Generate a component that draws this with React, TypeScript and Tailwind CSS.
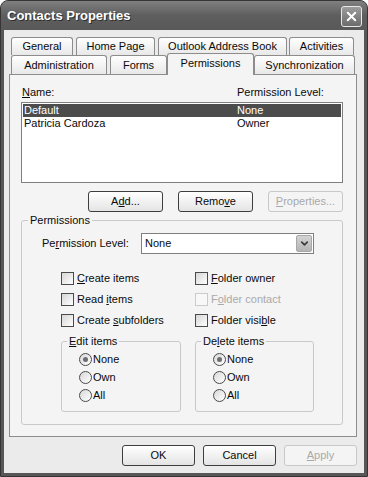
import { ChevronDown, X } from "lucide-react";

const Acc = ({ text, at }: { text: string; at: number }) => (
  <>
    {text.slice(0, at)}
    <span className="underline underline-offset-[1px]">{text[at]}</span>
    {text.slice(at + 1)}
  </>
);

const BackTab = ({ label, className }: { label: string; className: string }) => (
  <div
    className={`h-[18px] flex items-center justify-center border border-b-0 border-[#8c8c8c] rounded-t-[3px] bg-gradient-to-b from-white to-[#e8e8e8] ${className}`}
  >
    {label}
  </div>
);

const FrontTab = ({ label, className, selected }: { label: string; className: string; selected?: boolean }) =>
  selected ? (
    <div
      className={`h-[22px] self-end flex items-start pt-[3px] justify-center border border-b-0 border-[#8c8c8c] rounded-t-[3px] bg-[#f4f4f4] ${className}`}
    >
      {label}
    </div>
  ) : (
    <div
      className={`h-[19px] self-start flex items-center justify-center border border-b-0 border-[#8c8c8c] rounded-t-[3px] bg-gradient-to-b from-white to-[#e8e8e8] ${className}`}
    >
      {label}
    </div>
  );

const Button = ({ children, className, disabled }: { children: React.ReactNode; className: string; disabled?: boolean }) => (
  <div
    className={`h-[21px] flex items-center justify-center rounded-[3px] border ${
      disabled
        ? "border-[#c8c8c8] text-[#a9a9a9] bg-[#f4f4f4]"
        : "border-[#3e3e3e] bg-gradient-to-b from-white to-[#e4e4e4]"
    } ${className}`}
  >
    {children}
  </div>
);

const Check = ({ label, at, disabled }: { label: string; at: number; disabled?: boolean }) => (
  <div className="h-[21px] flex items-center">
    <span
      className={`w-[13px] h-[13px] border ${
        disabled ? "border-[#cbcbcb] bg-[#f8f8f8]" : "border-[#4a4a4a] bg-gradient-to-br from-[#d6d6d6] to-white"
      }`}
    />
    <span className={`ml-[3px] ${disabled ? "text-[#a9a9a9]" : ""}`}>
      <Acc text={label} at={at} />
    </span>
  </div>
);

const Radio = ({ label, checked }: { label: string; checked?: boolean }) => (
  <div className="h-[18px] flex items-center">
    <span className="w-[13px] h-[13px] rounded-full border border-[#4a4a4a] bg-gradient-to-br from-[#d8d8d8] to-white flex items-center justify-center">
      {checked ? <span className="w-[5px] h-[5px] rounded-full bg-[#6e6e6e]" /> : null}
    </span>
    <span className="ml-[1px]">{label}</span>
  </div>
);

const SubGroup = ({ title, at, className }: { title: string; at: number; className: string }) => (
  <fieldset className={`border border-[#c9c9c9] rounded-[3px] pb-[7px] ${className}`}>
    <legend className="ml-[5px] px-[2px] leading-[13px]">
      <Acc text={title} at={at} />
    </legend>
    <div className="pl-[17px] mt-[2px] flex flex-col">
      <Radio label="None" checked />
      <Radio label="Own" />
      <Radio label="All" />
    </div>
  </fieldset>
);

const App = () => {
  return (
    <div className="w-[368px] h-[477px] bg-white text-[11px] leading-[13px] text-[#0a0a0a] font-['Liberation_Sans',Arial,sans-serif]">
      <div className="w-full h-full flex flex-col rounded-t-[8px] border border-[#353535] bg-[#575757]">
        <div className="h-[29px] flex items-center justify-between pl-[6px] pr-[5px] rounded-t-[7px] bg-gradient-to-b from-[#808080] via-[#5e5e5e] to-[#595959]">
          <span className="text-white font-bold text-[13px] leading-[16px] mt-[1px] [text-shadow:1px_1px_0_#2e2e2e]">
            Contacts Properties
          </span>
          <div className="w-[21px] h-[21px] mt-[2px] rounded-[3px] border border-[#e8e8e8] bg-gradient-to-b from-[#9c9c9c] to-[#6c6c6c] flex items-center justify-center">
            <X size={15} strokeWidth={3.2} color="#ffffff" />
          </div>
        </div>

        <div className="flex-1 mx-[3px] mb-[3px] bg-[#ebebeb] pl-[5px] pr-[7px] pt-[7px] flex flex-col">
          {/* tabs */}
          <div className="h-[18px] flex">
            <BackTab label="General" className="ml-[2px] w-[62px]" />
            <BackTab label="Home Page" className="ml-[3px] w-[79px]" />
            <BackTab label="Outlook Address Book" className="ml-[3px] w-[129px]" />
            <BackTab label="Activities" className="ml-[2px] w-[65px]" />
          </div>
          <div className="h-[20px] -mb-[1px] flex items-end relative z-10">
            <FrontTab label="Administration" className="ml-[2px] w-[96px]" />
            <FrontTab label="Forms" className="ml-[3px] w-[57px]" />
            <FrontTab label="Permissions" className="w-[87px]" selected />
            <FrontTab label="Synchronization" className="w-[101px]" />
          </div>

          {/* panel */}
          <div className="h-[363px] border border-[#8d8d8d] bg-[#f4f4f4] pl-[11px] pr-[13px] pt-[10px] flex flex-col">
            <div className="h-[14px] flex items-center pl-[1px]">
              <span className="w-[215px]">
                <Acc text="Name:" at={0} />
              </span>
              <span>Permission Level:</span>
            </div>

            <div className="mt-[3px] h-[81px] border border-[#7f7f7f] bg-white p-[1px]">
              <div className="h-[13px] flex items-center bg-[#4c4c4c] text-white">
                <span className="w-[214px] pl-[1px]">Default</span>
                <span>None</span>
              </div>
              <div className="h-[13px] flex items-center">
                <span className="w-[214px] pl-[1px]">Patricia Cardoza</span>
                <span>Owner</span>
              </div>
            </div>

            <div className="mt-[8px] flex justify-end gap-[15px]">
              <Button className="w-[75px]">
                <Acc text="Add..." at={1} />
              </Button>
              <Button className="w-[75px]">
                <Acc text="Remove" at={4} />
              </Button>
              <Button className="w-[75px]" disabled>
                <Acc text="Properties..." at={0} />
              </Button>
            </div>

            <fieldset className="mt-[2px] border border-[#c9c9c9] rounded-[3px] pb-[12px]">
              <legend className="ml-[6px] px-[2px] leading-[13px]">Permissions</legend>
              <div className="pl-[20px] flex flex-col">
                <div className="mt-[6px] h-[21px] flex items-center">
                  <span className="w-[99px]">
                    <Acc text="Permission Level:" at={2} />
                  </span>
                  <div className="w-[173px] h-[21px] border border-[#7f7f7f] bg-white flex items-center justify-between pl-[3px] pr-[1px]">
                    <span>None</span>
                    <span className="w-[16px] h-[17px] rounded-[2px] border border-[#a8a8a8] bg-gradient-to-b from-[#d4d4d4] to-[#b4b4b4] flex items-center justify-center">
                      <ChevronDown size={11} strokeWidth={3.5} color="#3a3a3a" />
                    </span>
                  </div>
                </div>

                <div className="mt-[14px] ml-[19px] grid grid-cols-[134px_1fr]">
                  <Check label="Create items" at={0} />
                  <Check label="Folder owner" at={0} />
                  <Check label="Read items" at={5} />
                  <Check label="Folder contact" at={1} disabled />
                  <Check label="Create subfolders" at={7} />
                  <Check label="Folder visible" at={11} />
                </div>

                <div className="mt-[4px] ml-[19px] flex gap-[14px]">
                  <SubGroup title="Edit items" at={0} className="w-[120px]" />
                  <SubGroup title="Delete items" at={2} className="w-[119px]" />
                </div>
              </div>
            </fieldset>
          </div>

          <div className="mt-[8px] flex justify-end gap-[8px]">
            <Button className="w-[73px]">OK</Button>
            <Button className="w-[73px]">Cancel</Button>
            <Button className="w-[73px]" disabled>
              <Acc text="Apply" at={0} />
            </Button>
          </div>
        </div>
      </div>
    </div>
  );
};

export default App;
